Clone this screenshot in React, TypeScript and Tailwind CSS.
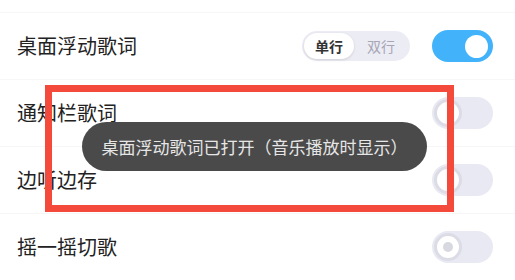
import React from 'react'

const font = { fontFamily: '"Noto Sans CJK SC", "Noto Sans", sans-serif' }

function OffToggle({ dot }: { dot?: boolean }) {
  return (
    <div className="flex h-[32px] w-[61px] items-center rounded-full bg-[#e9e9f3] px-[2px]">
      <div className="flex h-[28px] w-[28px] items-center justify-center rounded-full border-[3px] border-[#dcdce6] bg-white">
        {dot && <div className="h-[10px] w-[10px] rounded-full bg-[#d8d8e0]" />}
      </div>
    </div>
  )
}

function OnToggle() {
  return (
    <div className="flex h-[32px] w-[61px] items-center justify-end rounded-full bg-[#42b3fb] px-[5px]">
      <div className="h-[23px] w-[23px] rounded-full bg-white" />
    </div>
  )
}

function Row({ label, children }: { label: string; children: React.ReactNode }) {
  return (
    <div className="flex h-[67px] items-center justify-between border-b border-[#f7f7f8] pl-[17px] pr-[22px]">
      <span className="text-[20px] leading-none text-[#222]">{label}</span>
      <div className="flex items-center gap-[22px]">{children}</div>
    </div>
  )
}

export default function App() {
  return (
    <div className="relative h-[280px] w-[515px] overflow-hidden bg-white" style={font}>
      <div className="h-[13px] border-b border-[#f7f7f8]" />
      <Row label="桌面浮动歌词">
        <div className="flex h-[30px] w-[108px] items-center rounded-full bg-[#ececf4] p-[2px]">
          <div className="flex h-[26px] w-[50px] items-center justify-center rounded-full bg-white text-[14px] font-bold text-[#333] shadow-[0_1px_3px_rgba(0,0,0,0.12)]">
            单行
          </div>
          <div className="flex flex-1 items-center justify-center text-[14px] text-[#a6a6b6]">
            双行
          </div>
        </div>
        <OnToggle />
      </Row>
      <Row label="通知栏歌词">
        <OffToggle />
      </Row>
      <Row label="边听边存">
        <OffToggle />
      </Row>
      <Row label="摇一摇切歌">
        <OffToggle dot />
      </Row>

      <div className="absolute left-[45px] top-[85px] h-[127px] w-[409px] border-[7px] border-[#f34a3b]" />
      <div className="absolute left-[82px] top-[122px] flex h-[49px] w-[345px] items-center justify-center rounded-full bg-[#4a4a4a] text-[17px] text-[#e6e6e6]">
        桌面浮动歌词已打开（音乐播放时显示）
      </div>
    </div>
  )
}
